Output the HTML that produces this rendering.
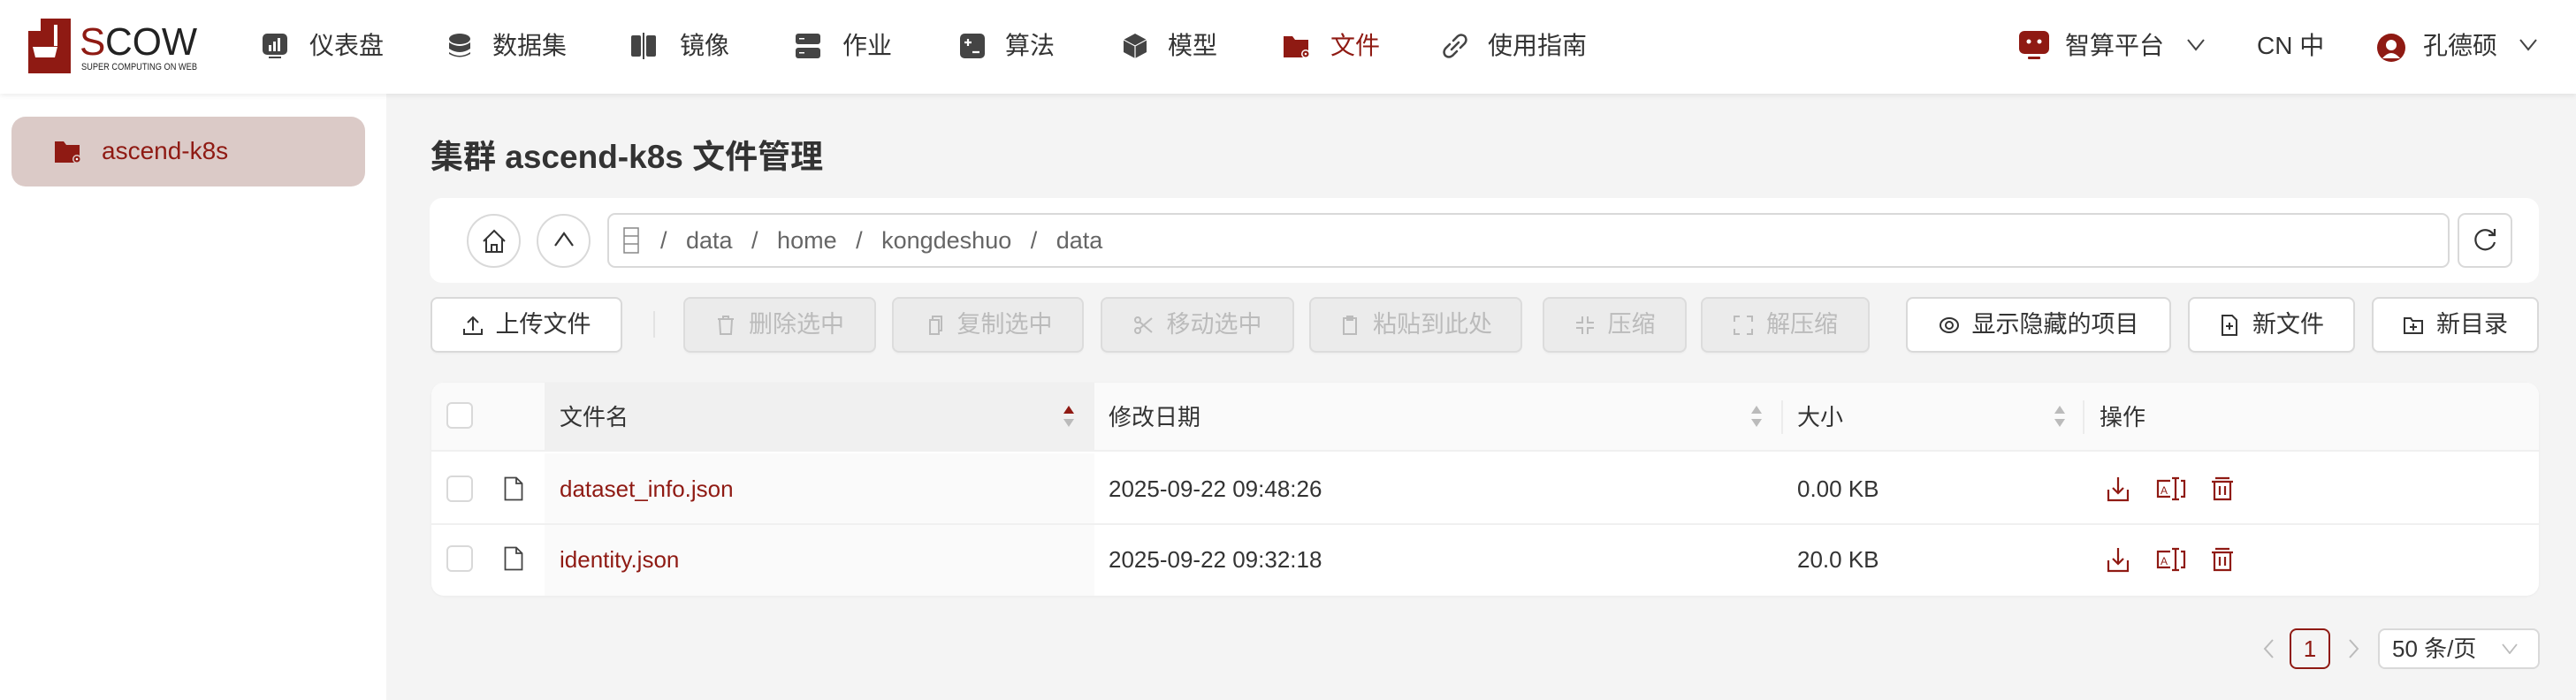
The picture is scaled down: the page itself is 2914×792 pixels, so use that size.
<!DOCTYPE html>
<html><head><meta charset="utf-8"><style>
*{box-sizing:border-box;margin:0;padding:0}
body{width:2914px;height:792px;background:#f4f4f4;font-family:"Liberation Sans","Noto Sans CJK SC",sans-serif;color:#333;position:relative;overflow:hidden}
.a{position:absolute}
.hdr{left:0;top:0;width:2914px;height:106px;background:#fff;box-shadow:0 2px 6px rgba(0,0,0,.08);z-index:2}
.nt{position:absolute;top:33px;font-size:28px;line-height:38px;color:#333}
.ni{position:absolute;top:37px;width:30px;height:30px}
.side{left:0;top:106px;width:437px;height:686px;background:#fff}
.btn{position:absolute;top:336px;height:63px;border:2px solid #d9d9d9;border-radius:8px;background:#fff;font-size:27px;line-height:59px;color:#333;display:flex;align-items:center;justify-content:center;gap:14px;box-shadow:0 2px 0 rgba(0,0,0,.02)}
.dis{background:#ebebeb;color:#bbb;border-color:#dcdcdc}
.btn svg{width:24px;height:24px}
.tx{position:absolute;font-size:26px;line-height:30px}
.cb{position:absolute;left:505px;width:30px;height:30px;border:2px solid #d9d9d9;border-radius:6px;background:#fff}
.red{color:#8f1a13}
</style></head><body>
<div class="a hdr">
  <svg class="a" style="left:30px;top:20px" width="200" height="64" viewBox="0 0 200 64">
    <rect x="2" y="15" width="26" height="48" fill="#8f1a13"/>
    <rect x="16" y="1" width="34" height="62" fill="#8f1a13"/>
    <path d="M7 33 H35 L32 45 H10 Z" fill="#fff"/>
    <rect x="31" y="8" width="4" height="24" fill="#fff"/>
    <text x="60" y="42" font-family="Liberation Sans" font-size="44" fill="#8f1a13">S</text>
    <text x="89" y="42" font-family="Liberation Sans" font-size="44" fill="#222" textLength="104" lengthAdjust="spacingAndGlyphs">COW</text>
    <text x="62" y="59" font-family="Liberation Sans" font-size="11" fill="#222" textLength="131" lengthAdjust="spacingAndGlyphs">SUPER COMPUTING ON WEB</text>
  </svg>
  <svg class="ni" style="left:296px" viewBox="0 0 30 30"><rect x="1" y="1" width="28" height="24" rx="5" fill="#444"/><rect x="8" y="14" width="3" height="7" fill="#fff"/><rect x="13" y="10" width="3" height="11" fill="#fff"/><rect x="18" y="6" width="3" height="15" fill="#fff"/><rect x="8" y="27" width="14" height="2" fill="#444"/></svg>
  <div class="nt" style="left:350px">仪表盘</div>
  <svg class="ni" style="left:505px" viewBox="0 0 30 30"><ellipse cx="15" cy="7" rx="12" ry="6" fill="#444"/><path d="M3 11 Q15 19 27 11 V18 Q15 26 3 18Z" fill="#444"/><path d="M3 22 Q15 30 27 22 V24 Q15 31 3 24Z" fill="#444"/></svg>
  <div class="nt" style="left:557px">数据集</div>
  <svg class="ni" style="left:713px" viewBox="0 0 30 30"><rect x="1" y="3" width="11" height="24" rx="2" fill="#444"/><rect x="18" y="3" width="11" height="24" rx="2" fill="#444"/><rect x="14" y="0" width="2" height="30" fill="#444"/></svg>
  <div class="nt" style="left:769px">镜像</div>
  <svg class="ni" style="left:899px" viewBox="0 0 30 30"><rect x="1" y="1" width="28" height="12" rx="3" fill="#444"/><rect x="1" y="17" width="28" height="12" rx="3" fill="#444"/><rect x="5" y="6" width="6" height="1.5" fill="#fff"/><rect x="5" y="22" width="6" height="1.5" fill="#fff"/></svg>
  <div class="nt" style="left:953px">作业</div>
  <svg class="ni" style="left:1085px" viewBox="0 0 30 30"><rect x="1" y="1" width="28" height="28" rx="5" fill="#444"/><path d="M6 11h8M10 7v8M15 22h8" stroke="#fff" stroke-width="2.2"/></svg>
  <div class="nt" style="left:1137px">算法</div>
  <svg class="ni" style="left:1269px" viewBox="0 0 30 30"><path d="M15 1 L28 8 V22 L15 29 L2 22 V8Z" fill="#444"/><path d="M2 8 L15 15 L28 8 M15 15 V29" stroke="#fff" stroke-width="1.2" fill="none"/></svg>
  <div class="nt" style="left:1321px">模型</div>
  <svg class="ni" style="left:1451px" viewBox="0 0 30 30"><path d="M1 4 H11 L14 8 H29 V28 H1Z" fill="#8f1a13"/><circle cx="26" cy="24" r="5" fill="#fff"/><circle cx="26" cy="24" r="3.5" fill="#8f1a13"/><circle cx="26" cy="24" r="1.3" fill="#fff"/></svg>
  <div class="nt red" style="left:1505px">文件</div>
  <svg class="ni" style="left:1631px" viewBox="0 0 30 30"><path d="M13 9 L18 4 Q22 1 26 4 Q29 8 26 12 L21 17 M17 21 L12 26 Q8 29 4 26 Q1 22 4 18 L9 13 M11 19 L19 11" stroke="#444" stroke-width="2.5" fill="none" stroke-linecap="round"/></svg>
  <div class="nt" style="left:1683px">使用指南</div>
  <svg class="ni" style="left:2283px;top:34px;width:36px;height:36px" viewBox="0 0 36 36"><rect x="1" y="1" width="34" height="26" rx="6" fill="#8f1a13"/><circle cx="12" cy="13" r="2.5" fill="#fff"/><circle cx="24" cy="13" r="2.5" fill="#fff"/><rect x="11" y="30" width="14" height="3" rx="1" fill="#8f1a13"/></svg>
  <div class="nt" style="left:2336px">智算平台</div>
  <svg class="a" style="left:2474px;top:44px" width="20" height="14" viewBox="0 0 20 14"><path d="M1 1 L10 12 L19 1" stroke="#444" stroke-width="2" fill="none"/></svg>
  <div class="nt" style="left:2553px">CN 中</div>
  <svg class="ni" style="left:2689px;top:38px;width:32px;height:32px" viewBox="0 0 32 32"><circle cx="16" cy="16" r="16" fill="#8f1a13"/><circle cx="16" cy="13" r="6" fill="#fff"/><path d="M6 28 Q16 16 26 28Z" fill="#fff"/></svg>
  <div class="nt" style="left:2741px">孔德硕</div>
  <svg class="a" style="left:2850px;top:44px" width="20" height="14" viewBox="0 0 20 14"><path d="M1 1 L10 12 L19 1" stroke="#444" stroke-width="2" fill="none"/></svg>
</div>

<div class="a side"></div>
<div class="a" style="left:13px;top:132px;width:400px;height:79px;background:#dbcac7;border-radius:16px"></div>
<svg class="a" style="left:61px;top:158px" width="30" height="28" viewBox="0 0 30 28"><path d="M1 2 H11 L14 6 H29 V26 H1Z" fill="#8f1a13"/><circle cx="26" cy="22" r="5" fill="#dbcac7"/><circle cx="26" cy="22" r="3.5" fill="#8f1a13"/><circle cx="26" cy="22" r="1.3" fill="#fff"/></svg>
<div class="a red" style="left:115px;top:153px;font-size:28px;line-height:36px">ascend-k8s</div>

<div class="a" style="left:487px;top:155px;font-size:37px;line-height:46px;color:#333;font-weight:bold">集群 ascend-k8s 文件管理</div>

<div class="a" style="left:486px;top:224px;width:2386px;height:96px;background:#fff;border-radius:14px"></div>
<div class="a" style="left:528px;top:242px;width:61px;height:61px;border:2px solid #d9d9d9;border-radius:50%;background:#fff"></div>
<svg class="a" style="left:544px;top:258px" width="30" height="30" viewBox="0 0 30 30"><path d="M3 15 L15 3 L27 15 M6 12 V27 H24 V12 M12 27 V19 H18 V27" stroke="#333" stroke-width="2" fill="none"/></svg>
<div class="a" style="left:607px;top:242px;width:61px;height:61px;border:2px solid #d9d9d9;border-radius:50%;background:#fff"></div>
<svg class="a" style="left:626px;top:262px" width="24" height="18" viewBox="0 0 24 18"><path d="M2 16 L12 2 L22 16" stroke="#333" stroke-width="2.2" fill="none"/></svg>
<div class="a" style="left:687px;top:241px;width:2084px;height:62px;border:2px solid #d9d9d9;border-radius:9px;background:#fff"></div>
<svg class="a" style="left:705px;top:257px" width="18" height="30" viewBox="0 0 18 30"><rect x="1" y="1" width="16" height="28" fill="none" stroke="#888" stroke-width="1.5"/><path d="M1 10 H17 M1 19 H17" stroke="#888" stroke-width="1.5"/></svg>
<div class="a" style="left:747px;top:256px;font-size:27px;line-height:32px;color:#666;word-spacing:14px">/ data / home / kongdeshuo / data</div>
<div class="a" style="left:2780px;top:241px;width:62px;height:62px;border:2px solid #d9d9d9;border-radius:9px;background:#fff"></div>
<svg class="a" style="left:2797px;top:258px" width="28" height="28" viewBox="0 0 28 28"><path d="M24 8 A11 11 0 1 0 25 16" stroke="#333" stroke-width="2.2" fill="none"/><path d="M18 8 H25 V1" stroke="#333" stroke-width="2.2" fill="none"/></svg>

<div class="btn" style="left:487px;width:217px"><svg viewBox="0 0 24 24"><path d="M12 18 V3 M6 9 L12 3 L18 9 M2 16 V22 H22 V16" stroke="#333" stroke-width="2" fill="none"/></svg>上传文件</div>
<div class="a" style="left:739px;top:352px;width:2px;height:30px;background:#e3e3e3"></div>
<div class="btn dis" style="left:773px;width:218px"><svg viewBox="0 0 24 24"><path d="M3 5 H21 M9 5 V2 H15 V5 M5 5 L6 22 H18 L19 5" stroke="#bbb" stroke-width="2" fill="none"/></svg>删除选中</div>
<div class="btn dis" style="left:1009px;width:217px"><svg viewBox="0 0 24 24"><path d="M7 6 H17 V22 H7Z M10 6 V2 H20 V18 H17" stroke="#bbb" stroke-width="2" fill="none"/></svg>复制选中</div>
<div class="btn dis" style="left:1245px;width:219px"><svg viewBox="0 0 24 24"><circle cx="5" cy="6" r="3" stroke="#bbb" stroke-width="2" fill="none"/><circle cx="5" cy="18" r="3" stroke="#bbb" stroke-width="2" fill="none"/><path d="M7 8 L21 20 M7 16 L21 4" stroke="#bbb" stroke-width="2"/></svg>移动选中</div>
<div class="btn dis" style="left:1481px;width:241px"><svg viewBox="0 0 24 24"><path d="M5 4 H19 V22 H5Z M9 2 H15 V6 H9Z" stroke="#bbb" stroke-width="2" fill="none"/></svg>粘贴到此处</div>
<div class="btn dis" style="left:1745px;width:163px"><svg viewBox="0 0 24 24"><path d="M9 2 V9 H2 M15 2 V9 H22 M9 22 V15 H2 M15 22 V15 H22" stroke="#bbb" stroke-width="2" fill="none"/></svg>压缩</div>
<div class="btn dis" style="left:1924px;width:191px"><svg viewBox="0 0 24 24"><path d="M2 8 V2 H8 M16 2 H22 V8 M2 16 V22 H8 M16 22 H22 V16" stroke="#bbb" stroke-width="2" fill="none"/></svg>解压缩</div>
<div class="btn" style="left:2156px;width:300px"><svg viewBox="0 0 24 24"><ellipse cx="12" cy="12" rx="10" ry="8" stroke="#333" stroke-width="2" fill="none"/><circle cx="12" cy="12" r="4" stroke="#333" stroke-width="2" fill="none"/></svg>显示隐藏的项目</div>
<div class="btn" style="left:2475px;width:189px"><svg viewBox="0 0 24 24"><path d="M4 1 H15 L20 6 V23 H4Z M12 9 V17 M8 13 H16" stroke="#333" stroke-width="2" fill="none"/></svg>新文件</div>
<div class="btn" style="left:2683px;width:189px"><svg viewBox="0 0 24 24"><path d="M2 4 H9 L11 7 H22 V21 H2Z M12 10 V18 M8 14 H16" stroke="#333" stroke-width="2" fill="none"/></svg>新目录</div>

<div class="a" style="left:488px;top:433px;width:2384px;height:241px;background:#fff;border-radius:14px;overflow:hidden;box-shadow:0 1px 3px rgba(0,0,0,.04)">
  <div class="a" style="left:0;top:0;width:2384px;height:78px;background:#fafafa;border-bottom:2px solid #f0f0f0"></div>
  <div class="a" style="left:128px;top:0;width:622px;height:78px;background:#f0f0f0"></div>
  <div class="a" style="left:128px;top:80px;width:622px;height:161px;background:#fafafa"></div>
  <div class="a" style="left:0;top:159px;width:2384px;height:2px;background:#f0f0f0"></div>
  <div class="a" style="left:1527px;top:20px;width:2px;height:38px;background:#ececec"></div>
  <div class="a" style="left:1868px;top:20px;width:2px;height:38px;background:#ececec"></div>
</div>
<div class="cb" style="top:455px"></div>
<div class="cb" style="top:538px"></div>
<div class="cb" style="top:617px"></div>
<div class="tx" style="left:633px;top:457px">文件名</div>
<div class="tx" style="left:1254px;top:457px">修改日期</div>
<div class="tx" style="left:2033px;top:457px">大小</div>
<div class="tx" style="left:2375px;top:457px">操作</div>
<svg class="a" style="left:1202px;top:458px" width="14" height="26" viewBox="0 0 14 26"><path d="M7 1 L13 10 H1Z" fill="#8f1a13"/><path d="M7 25 L13 16 H1Z" fill="#bbb"/></svg>
<svg class="a" style="left:1980px;top:458px" width="14" height="26" viewBox="0 0 14 26"><path d="M7 1 L13 10 H1Z" fill="#bbb"/><path d="M7 25 L13 16 H1Z" fill="#bbb"/></svg>
<svg class="a" style="left:2323px;top:458px" width="14" height="26" viewBox="0 0 14 26"><path d="M7 1 L13 10 H1Z" fill="#bbb"/><path d="M7 25 L13 16 H1Z" fill="#bbb"/></svg>

<svg class="a" style="left:570px;top:539px" width="22" height="28" viewBox="0 0 22 28"><path d="M1.5 1.5 H14 L20.5 8 V26.5 H1.5Z M14 1.5 V8 H20.5" stroke="#444" stroke-width="1.8" fill="none"/></svg>
<svg class="a" style="left:570px;top:618px" width="22" height="28" viewBox="0 0 22 28"><path d="M1.5 1.5 H14 L20.5 8 V26.5 H1.5Z M14 1.5 V8 H20.5" stroke="#444" stroke-width="1.8" fill="none"/></svg>
<div class="tx red" style="left:633px;top:538px">dataset_info.json</div>
<div class="tx red" style="left:633px;top:618px">identity.json</div>
<div class="tx" style="left:1254px;top:538px">2025-09-22 09:48:26</div>
<div class="tx" style="left:1254px;top:618px">2025-09-22 09:32:18</div>
<div class="tx" style="left:2033px;top:538px">0.00 KB</div>
<div class="tx" style="left:2033px;top:618px">20.0 KB</div>

<svg class="a" style="left:2382px;top:538px" width="150" height="30" viewBox="0 0 150 30"><path d="M14 2 V20 M8 14 L14 20 L20 14 M3 16 V28 H25 V16" stroke="#8f1a13" stroke-width="2.2" fill="none"/><path d="M73 6 H59 V24 H73 M85 6 H89 V24 H85 M79 3 V27 M75 3 H83 M75 27 H83" stroke="#8f1a13" stroke-width="2.2" fill="none"/><text x="62" y="21" font-size="12" font-family="Liberation Sans" fill="#8f1a13">A</text><path d="M124 3 H140 M120 7 H144 M123 7 V27 H141 V7 M129 12 V22 M135 12 V22" stroke="#8f1a13" stroke-width="2.2" fill="none"/></svg>
<svg class="a" style="left:2382px;top:618px" width="150" height="30" viewBox="0 0 150 30"><path d="M14 2 V20 M8 14 L14 20 L20 14 M3 16 V28 H25 V16" stroke="#8f1a13" stroke-width="2.2" fill="none"/><path d="M73 6 H59 V24 H73 M85 6 H89 V24 H85 M79 3 V27 M75 3 H83 M75 27 H83" stroke="#8f1a13" stroke-width="2.2" fill="none"/><text x="62" y="21" font-size="12" font-family="Liberation Sans" fill="#8f1a13">A</text><path d="M124 3 H140 M120 7 H144 M123 7 V27 H141 V7 M129 12 V22 M135 12 V22" stroke="#8f1a13" stroke-width="2.2" fill="none"/></svg>

<svg class="a" style="left:2559px;top:722px" width="14" height="24" viewBox="0 0 14 24"><path d="M12 2 L3 12 L12 22" stroke="#bbb" stroke-width="2" fill="none"/></svg>
<div class="a" style="left:2590px;top:711px;width:46px;height:46px;border:2px solid #8f1a13;border-radius:8px;color:#8f1a13;font-size:26px;line-height:42px;text-align:center">1</div>
<svg class="a" style="left:2656px;top:722px" width="14" height="24" viewBox="0 0 14 24"><path d="M2 2 L11 12 L2 22" stroke="#bbb" stroke-width="2" fill="none"/></svg>
<div class="a" style="left:2690px;top:711px;width:183px;height:46px;border:2px solid #d9d9d9;border-radius:8px;background:#fff;font-size:26px;line-height:42px;padding-left:14px">50 条/页</div>
<svg class="a" style="left:2830px;top:728px" width="18" height="12" viewBox="0 0 18 12"><path d="M1 1 L9 11 L17 1" stroke="#bbb" stroke-width="1.8" fill="none"/></svg>
</body></html>
